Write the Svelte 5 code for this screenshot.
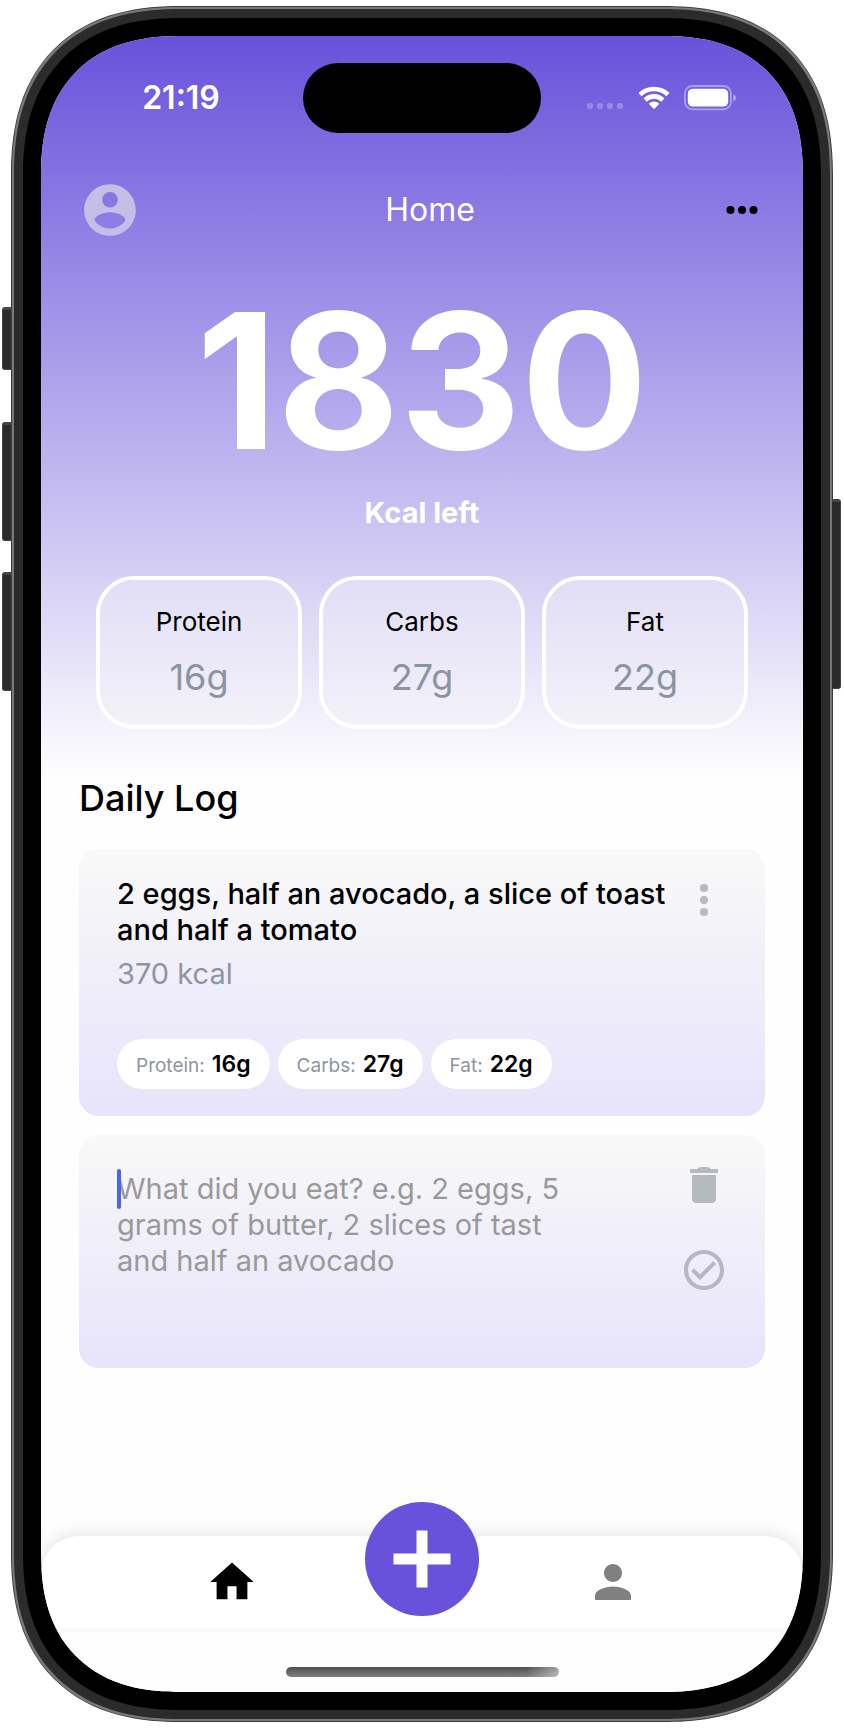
<script>
  const totals = [
    { label: 'Protein', value: '16g' },
    { label: 'Carbs', value: '27g' },
    { label: 'Fat', value: '22g' }
  ];
  let draft = $state('');
</script>

<div class="stage">
  <div class="phone">
    <span class="key action"></span>
    <span class="key volume-up"></span>
    <span class="key volume-down"></span>
    <span class="key power"></span>

    <div class="bezel">
      <div class="screen">
        <div class="hero">
          <div class="status">
            <span class="time">21:19</span>
            <span class="island"></span>
            <span class="signals">
              <svg width="38" height="26" viewBox="0 0 38 26" fill="#fff" fill-opacity="0.25" aria-hidden="true">
                <rect x="1" y="18" width="6" height="6" rx="2" />
                <rect x="11" y="18" width="6" height="6" rx="2" />
                <rect x="21" y="18" width="6" height="6" rx="2" />
                <rect x="31" y="18" width="6" height="6" rx="2" />
              </svg>
              <svg width="32" height="26" viewBox="0 0 32 26" aria-hidden="true">
                <g fill="none" stroke="#fff" stroke-width="4.6">
                  <path d="M2 9.6A20.2 20.2 0 0 1 30 9.6" />
                  <path d="M7.1 15A12.8 12.8 0 0 1 24.900 15" />
                </g>
                <path d="M10.700 18.700A7.600 7.600 0 0 1 21.300 18.700L16.700 23.500Q16 24.200 15.300 23.500Z" fill="#fff" />
              </svg>
              <svg width="53" height="26" viewBox="0 0 53 26" aria-hidden="true">
                <rect x="0.900" y="1" width="46" height="23.400" rx="7.500" fill="none" stroke="#fff" stroke-opacity="0.4" stroke-width="1.800" />
                <rect x="3.800" y="3.800" width="40.400" height="17.800" rx="5" fill="#fff" />
                <path d="M49.300 9.200Q52 10.200 52 12.700T49.300 16.200Z" fill="#fff" fill-opacity="0.45" />
              </svg>
            </span>
          </div>

          <header class="topbar">
            <button class="icon" aria-label="Account">
              <svg width="62" height="62" viewBox="0 0 24 24" fill="#c5bfe8">
                <path d="M12 2C6.480 2 2 6.480 2 12s4.480 10 10 10 10-4.480 10-10S17.520 2 12 2zm0 3c1.660 0 3 1.340 3 3s-1.340 3-3 3-3-1.340-3-3 1.340-3 3-3zm0 14.200c-2.500 0-4.710-1.280-6-3.220.03-1.990 4-3.080 6-3.080 1.990 0 5.970 1.090 6 3.080-1.290 1.940-3.500 3.220-6 3.220z" />
              </svg>
            </button>
            <h1>Home</h1>
            <button class="icon" aria-label="More">
              <svg width="46" height="46" viewBox="0 0 24 24" fill="#000">
                <circle cx="6" cy="12" r="2.100" /><circle cx="12" cy="12" r="2.100" /><circle cx="18" cy="12" r="2.100" />
              </svg>
            </button>
          </header>

          <p class="calories">1830</p>
          <p class="caption">Kcal left</p>

          <div class="macros">
            {#each totals as t}
              <div class="macro">
                <span class="name">{t.label}</span>
                <span class="amount">{t.value}</span>
              </div>
            {/each}
          </div>
        </div>

        <main class="log">
          <h2>Daily Log</h2>

          <article class="card">
            <div class="entry">
              <div class="words">
                <h3>2 eggs, half an avocado, a slice of toast and half a tomato</h3>
                <p class="kcal">370 kcal</p>
              </div>
              <button class="icon" aria-label="Entry options">
                <svg width="48" height="48" viewBox="0 0 24 24" fill="#b5b9c0">
                  <circle cx="12" cy="6" r="2" /><circle cx="12" cy="12" r="2" /><circle cx="12" cy="18" r="2" />
                </svg>
              </button>
            </div>
            <div class="chips">
              {#each totals as t}
                <span class="chip"><span class="key-name">{t.label}:</span><b>{t.value}</b></span>
              {/each}
            </div>
          </article>

          <div class="card editor">
            <div class="field">
              <span class="caret"></span>
              <textarea
                rows="5"
                aria-label="Meal description"
                bind:value={draft}
                placeholder="What did you eat? e.g. 2 eggs, 5 grams of butter, 2 slices of tast and half an avocado"
              ></textarea>
            </div>
            <div class="tools">
              <button class="icon" aria-label="Delete">
                <svg width="48" height="48" viewBox="0 0 24 24" fill="#b5b9c0">
                  <path d="M6 19c0 1.100.9 2 2 2h8c1.100 0 2-.9 2-2V7H6v12zM19 4h-3.500q-1-1-2-1h-3q-1 0-2 1H5v2h14V4z" />
                </svg>
              </button>
              <button class="icon" aria-label="Save">
                <svg width="48" height="48" viewBox="0 0 24 24" fill="#b5b7c4">
                  <path d="M16.590 7.580L10 14.170l-2.990-2.980L5.600 12.600 10 17l8-8zM12 2C6.480 2 2 6.480 2 12s4.480 10 10 10 10-4.480 10-10S17.520 2 12 2zm0 18c-4.420 0-8-3.580-8-8s3.580-8 8-8 8 3.580 8 8-3.580 8-8 8z" />
                </svg>
              </button>
            </div>
          </div>
        </main>

        <nav class="tabs">
          <button class="icon" aria-label="Home">
            <svg width="52" height="52" viewBox="0 0 24 24" fill="#000">
              <path d="M9.900 20v-6h4.200v6h5v-8h2.900L12 3 2 12h2.900v8z" />
            </svg>
          </button>
          <button class="add" aria-label="Add meal">
            <svg width="58" height="58" viewBox="0 0 58 58" fill="#fff">
              <path d="M23.500 0.500h11v23h23v11h-23v23h-11v-23h-23v-11h23z" />
            </svg>
          </button>
          <button class="icon" aria-label="Profile">
            <svg width="54" height="54" viewBox="0 0 24 24" fill="#808080">
              <path d="M12 12c2.210 0 4-1.790 4-4s-1.790-4-4-4-4 1.790-4 4 1.790 4 4 4zm0 2c-2.670 0-8 1.340-8 4v2h16v-2c0-2.660-5.330-4-8-4z" />
            </svg>
          </button>
        </nav>
        <div class="bottom"><span class="indicator"></span></div>
      </div>
    </div>
  </div>
</div>

<style>
  :global(body) {
    background: #fff;
  }
  * {
    box-sizing: border-box;
  }
  h1, h2, h3, p {
    margin: 0;
  }
  button {
    padding: 0;
    border: 0;
    background: none;
    cursor: pointer;
  }
  svg {
    display: block;
    flex: none;
  }
  .stage {
    display: flex;
    min-height: 100vh;
    padding: 6px 11px 10px 11px;
    font-family: Inter, Roboto, sans-serif;
    color: #000;
  }
  .phone {
    position: relative;
    display: flex;
    flex: 1;
    min-width: 0;
    padding: 1px;
    border-radius: 152px;
    background: #3a3a3a;
  }
  .bezel {
    position: relative;
    display: flex;
    flex: 1;
    min-width: 0;
    padding: 18px;
    border: 9px solid #2b2b2b;
    border-radius: 149px;
    background: #000;
    box-shadow: 0 0 0 2px #787878;
    margin: 2px;
  }
  .screen {
    display: flex;
    flex-direction: column;
    flex: 1;
    min-width: 0;
    overflow: hidden;
    border-radius: 122px;
    background: #fefefe;
  }
  @supports (corner-shape: superellipse(1.25)) {
    .phone, .bezel, .screen {
      corner-shape: superellipse(1.25);
    }
    .phone { border-radius: 170px; }
    .bezel { border-radius: 167px; }
    .screen { border-radius: 140px; }
  }
  .key {
    position: absolute;
    width: 10px;
    left: -9px;
    border: 1px solid #444;
    border-top-width: 3px;
    border-radius: 3px 0 0 3px;
    background: #2b2b2b;
  }
  .action { top: 301px; height: 63px; }
  .volume-up { top: 416px; height: 119px; }
  .volume-down { top: 566px; height: 119px; }
  .power {
    top: 493px;
    right: -8px;
    left: auto;
    height: 190px;
    border-radius: 0 3px 3px 0;
  }

  .hero {
    padding-bottom: 47px;
    background: linear-gradient(#6852db, #fefefe);
  }
  .status {
    display: grid;
    grid-template-columns: 1fr auto 1fr;
    align-items: center;
    height: 124px;
    color: #fff;
  }
  .time {
    padding-left: 18px;
    font-size: 32px;
    font-weight: 600;
    line-height: 36px;
    text-align: center;
  }
  .island {
    width: 238px;
    height: 70px;
    border-radius: 35px;
    background: #000;
  }
  .signals {
    display: flex;
    align-items: center;
    justify-content: flex-end;
    gap: 14px;
    padding-right: 66px;
  }
  .topbar {
    display: grid;
    grid-template-columns: 1fr auto 1fr;
    align-items: center;
    height: 100px;
    padding: 0 38px;
  }
  .topbar .icon:last-child {
    justify-self: end;
  }
  .topbar .icon:first-child {
    justify-self: start;
  }
  h1 {
    padding-left: 16px;
    color: #fff;
    font-size: 32px;
    font-weight: 400;
    line-height: 40px;
  }
  .calories {
    margin-top: 29px;
    color: #fff;
    font-size: 188px;
    font-weight: 700;
    line-height: 184px;
    text-align: center;
  }
  .caption {
    margin-top: 22px;
    color: #fff;
    font-size: 29px;
    font-weight: 700;
    line-height: 36px;
    text-align: center;
  }
  .macros {
    display: grid;
    grid-template-columns: repeat(3, 1fr);
    gap: 17px;
    margin-top: 45px;
    padding: 0 55px;
  }
  .macro {
    display: flex;
    flex-direction: column;
    align-items: center;
    gap: 17px;
    padding: 26px 0;
    border: 4px solid #fff;
    border-radius: 38px;
    background: rgba(242, 242, 247, 0.4);
    background-clip: padding-box;
  }
  .name {
    font-size: 26px;
    line-height: 32px;
  }
  .amount {
    color: #8b949e;
    font-size: 36px;
    line-height: 44px;
  }

  .log {
    display: flex;
    flex-direction: column;
    gap: 19px;
    padding: 0 38px;
  }
  h2 {
    margin-bottom: 10px;
    font-size: 36px;
    font-weight: 500;
    line-height: 44px;
  }
  .card {
    padding: 27px 37px 27px 38px;
    border-radius: 20px;
    background: linear-gradient(#f9f9f8, #f2f1f9 35%, #e7e4fb);
  }
  .entry {
    display: flex;
    align-items: flex-start;
  }
  .words {
    flex: 1;
    min-width: 0;
  }
  h3 {
    font-size: 29px;
    font-weight: 500;
    line-height: 36px;
  }
  .kcal {
    margin-top: 8px;
    color: #8f959e;
    font-size: 29px;
    line-height: 36px;
  }
  .chips {
    display: flex;
    flex-wrap: wrap;
    gap: 8px;
    margin-top: 47px;
  }
  .chip {
    display: flex;
    align-items: baseline;
    gap: 7px;
    height: 50px;
    padding: 0 19px;
    border-radius: 25px;
    background: #fff;
    line-height: 50px;
  }
  .key-name {
    color: #8f959e;
    font-size: 19px;
  }
  b {
    font-size: 23px;
    font-weight: 600;
  }
  .editor {
    display: flex;
    padding-top: 26px;
    padding-bottom: 17px;
  }
  .field {
    position: relative;
    flex: 1;
    min-width: 0;
    padding: 10px 100px 0 0;
  }
  textarea {
    display: block;
    width: 100%;
    padding: 0;
    border: 0;
    outline: 0;
    resize: none;
    overflow: hidden;
    background: transparent;
    font-family: inherit;
    font-size: 29px;
    line-height: 36px;
  }
  textarea::placeholder {
    color: #999;
    opacity: 1;
  }
  .caret {
    position: absolute;
    top: 8px;
    left: 0;
    width: 4px;
    height: 40px;
    border-radius: 2px;
    background: #4a67ea;
  }
  .tools {
    display: flex;
    flex-direction: column;
    gap: 37px;
  }

  .tabs {
    display: grid;
    grid-template-columns: repeat(3, 1fr);
    align-items: center;
    justify-items: center;
    height: 92px;
    margin-top: auto;
    padding: 0 12.5%;
    border-radius: 38px 38px 0 0;
    background: #fff;
    box-shadow: 0 0 20px rgba(0, 0, 0, 0.13);
  }
  .add {
    display: flex;
    align-items: center;
    justify-content: center;
    width: 114px;
    height: 114px;
    margin-top: -46px;
    border-radius: 50%;
    background: #6852db;
  }
  .bottom {
    position: relative;
    display: flex;
    justify-content: center;
    height: 64px;
    padding-top: 39px;
    background: linear-gradient(#f9f9f9, #fefefe 6px);
  }
  .indicator {
    width: 273px;
    height: 10px;
    border-radius: 5px;
    background: linear-gradient(90deg, transparent 88%, rgba(255, 255, 255, 0.45)), linear-gradient(#505050, #808080);
  }
</style>
